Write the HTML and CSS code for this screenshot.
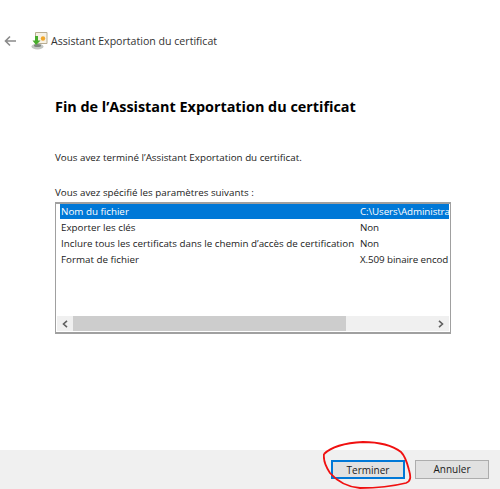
FILE: index.html
```html
<!DOCTYPE html>
<html>
  <head>
    <title>Assistant Exportation du certificat</title>
    <link rel="stylesheet" href="styles.css">
  </head>
  <body>
    <div class="wizard">
      <div class="topbar">
        <svg class="back" width="13" height="12" viewBox="0 0 13 12">
          <path d="M6 1.500 1.500 6 6 10.500M2 6h10" fill="none" stroke="#8a8a8a" stroke-width="1.600"/>
        </svg>
        <svg class="cert" width="17" height="18" viewBox="0 0 17 18">
          <path d="M4.500 .5h11.500v11H4.500z" fill="#f6f1e4" stroke="#b8ad92"/>
          <ellipse cx="6.500" cy="14.500" rx="6" ry="3" fill="#c2c6c2"/>
          <ellipse cx="6.500" cy="13.500" rx="3.500" ry="1.500" fill="#7f857f"/>
          <path d="M5 13 1.500 8.500H4V4h3v4.500h2.500z" fill="#47ad2c"/>
          <circle cx="12" cy="6.500" r="2.200" fill="#f0a62a"/>
        </svg>
        <span class="topbar-title">Assistant Exportation du certificat</span>
      </div>

      <div class="content">
        <h1>Fin de l’Assistant Exportation du certificat</h1>
        <p class="intro">Vous avez terminé l’Assistant Exportation du certificat.</p>
        <p class="list-label">Vous avez spécifié les paramètres suivants :</p>

        <div class="listbox">
          <div class="rows">
            <div class="row selected"><span class="name">Nom du fichier</span><span class="value">C:\Users\Administra</span></div>
            <div class="row"><span class="name">Exporter les clés</span><span class="value">Non</span></div>
            <div class="row"><span class="name">Inclure tous les certificats dans le chemin d’accès de certification</span><span class="value">Non</span></div>
            <div class="row"><span class="name">Format de fichier</span><span class="value">X.509 binaire encod</span></div>
          </div>
          <div class="hscroll">
            <svg class="arrow" width="6" height="8" viewBox="0 0 6 8"><path d="M5 .8 1.500 4 5 7.200" fill="none" stroke="#606060" stroke-width="1.600"/></svg>
            <div class="track"><div class="thumb"></div></div>
            <svg class="arrow" width="6" height="8" viewBox="0 0 6 8"><path d="M1 .8 4.500 4 1 7.200" fill="none" stroke="#606060" stroke-width="1.600"/></svg>
          </div>
        </div>
      </div>

      <div class="footer">
        <button class="btn btn-default">Terminer</button>
        <button class="btn">Annuler</button>
      </div>

      <svg class="scribble" width="90" height="48" viewBox="0 0 90 48">
        <path d="M1 13C8 6 20 2 40 1 58 1 70 5 78 11c4 4 6 10 8 18 2 7 2 11-3 13-12 3-30 5-46 5C24 46 14 40 7 32 3 26 0 20 1 13" fill="none" stroke="#f01010" stroke-width="1.800"/>
      </svg>
    </div>
  </body>
</html>
```

FILE: styles.css
```css
* {
  margin: 0;
  box-sizing: border-box;
}
html, body {
  height: 100%;
}
body {
  background-color: #fff;
  color: #1a1a1a;
  font: 9.800px/16px "Open Sans", "Noto Sans", sans-serif;
}
.wizard {
  position: relative;
  display: flex;
  flex-direction: column;
  height: 489px;
  overflow: hidden;
}
.topbar {
  display: flex;
  align-items: center;
  height: 18px;
  margin-top: 32px;
  padding-left: 4px;
}
.back {
  margin-right: 14px;
}
.cert {
  margin-right: 3px;
}
.topbar-title {
  color: #333;
  font-size: 10.600px;
}
.content {
  flex: 1;
  padding: 48px 49px 0 55px;
}
h1 {
  font-size: 14.400px;
  line-height: 18px;
  font-weight: 700;
  color: #000;
}
.intro {
  margin-top: 34px;
}
.list-label {
  margin-top: 19px;
}
.listbox {
  display: flex;
  flex-direction: column;
  height: 132px;
  margin-top: 1px;
  border: 1px solid #a0a0a0;
  border-bottom-width: 2px;
  border-top-width: 2px;
}
.rows {
  flex: 1;
  padding: 0 1px 0 4px;
}
.row {
  display: flex;
  height: 16px;
  white-space: nowrap;
  overflow: hidden;
}
.row.selected {
  height: 15px;
  margin-bottom: 1px;
  background-color: #0078d7;
  color: #fff;
}
.name {
  flex: none;
  width: 299px;
  padding-left: 1px;
}
.value {
  margin-left: 1px;
  letter-spacing: -0.1px;
}
.hscroll {
  display: flex;
  align-items: center;
  height: 15px;
  margin: 0 1px 1px;
  background-color: #f0f0f0;
}
.arrow {
  flex: none;
  margin: 0 5px;
}
.track {
  flex: 1;
  height: 100%;
}
.thumb {
  width: 273px;
  height: 100%;
  background-color: #cdcdcd;
}
.footer {
  display: flex;
  justify-content: flex-end;
  gap: 10px;
  height: 39px;
  padding: 10px 11px 0 0;
  background-color: #f0f0f0;
}
.btn {
  width: 74px;
  height: 19px;
  border: 1px solid #adadad;
  background-color: #e1e1e1;
  color: #1a1a1a;
  font: 10px/15px "Open Sans", "Noto Sans", sans-serif;
}
.btn-default {
  border: 2px solid #0078d7;
}
.scribble {
  position: absolute;
  left: 323px;
  top: 441px;
}
```
